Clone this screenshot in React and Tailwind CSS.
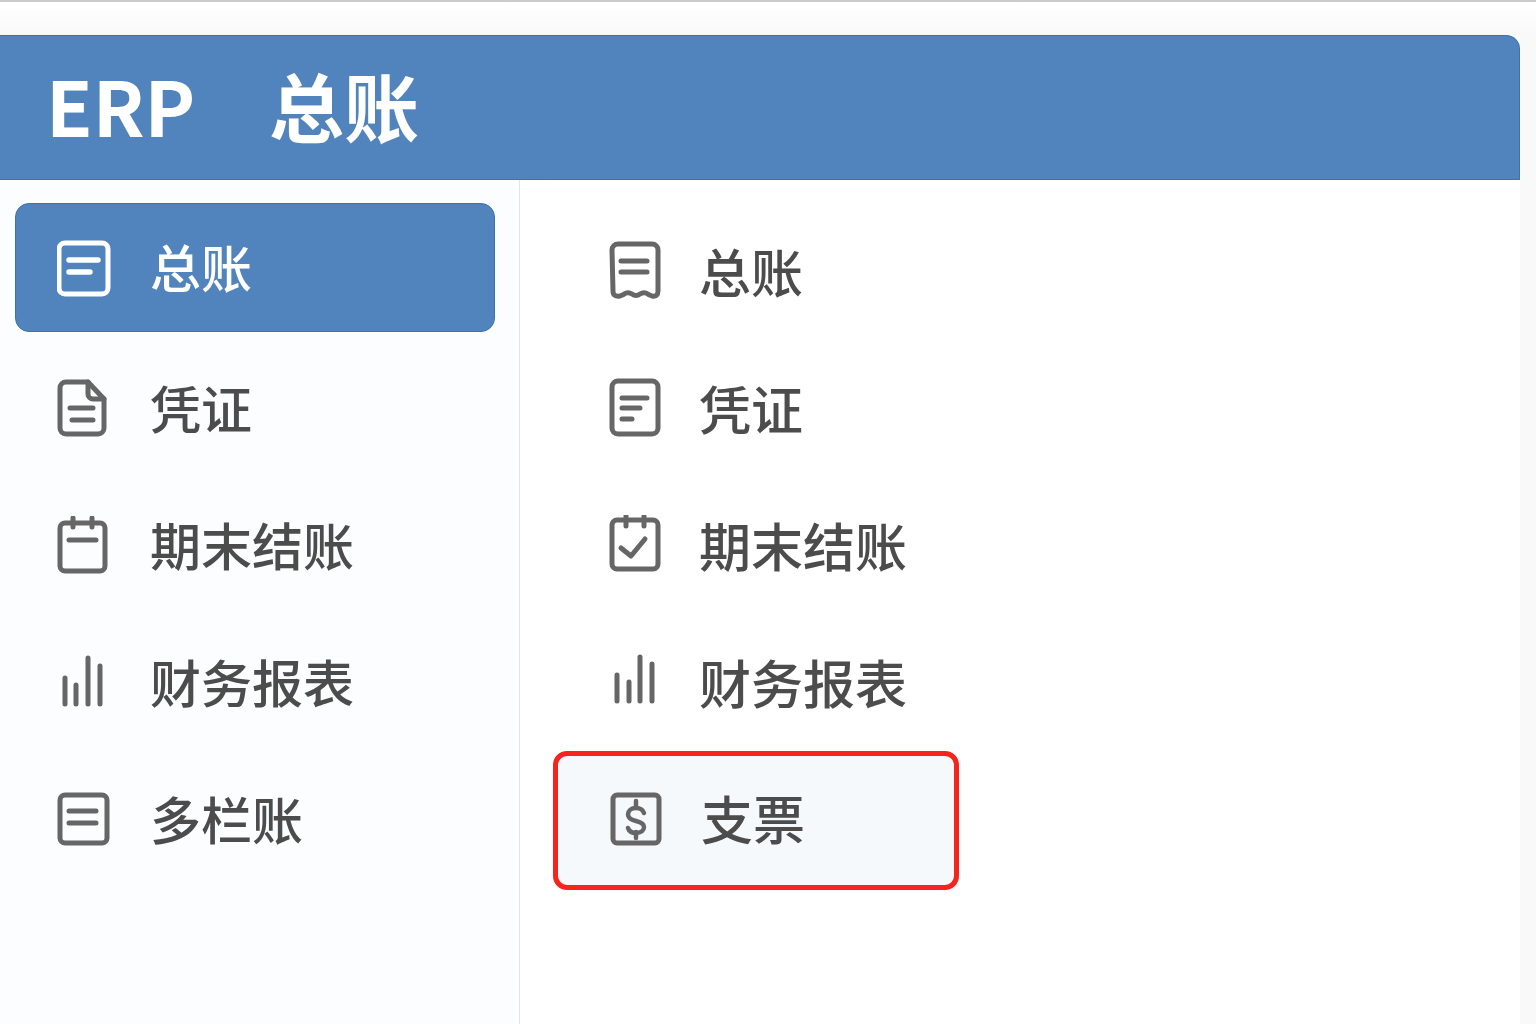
const cjk = { fontFamily: '"Noto Sans CJK SC", "Noto Sans", sans-serif' };

// every icon is drawn in a 60x60 box, coordinates read off the reference
const Icon = ({ children, stroke = '#666666' }) => (
  <svg
    className="w-[60px] h-[60px] shrink-0"
    viewBox="0 0 60 60"
    fill="none"
    stroke={stroke}
    strokeWidth={5}
    strokeLinecap="round"
    strokeLinejoin="round"
  >
    {children}
  </svg>
);

const sideItems = [
  {
    label: '总账',
    icon: (
      <>
        <rect x="2" y="5" width="49" height="51" rx="6" />
        <path d="M12 22H41M12 34H33" strokeWidth={5.5} />
      </>
    ),
  },
  {
    label: '凭证',
    icon: (
      <>
        <path d="M10 3H32L48 20V49a6 6 0 0 1-6 6H10a6 6 0 0 1-6-6V9a6 6 0 0 1 6-6Z" />
        <path d="M32 3V15a5 5 0 0 0 5 5H48" />
        <path d="M14 29H37M16 41H37" />
      </>
    ),
  },
  {
    label: '期末结账',
    icon: (
      <>
        <rect x="4" y="7" width="45" height="48" rx="5" />
        <path d="M17 2V11M36 2V11M13 24H40" />
      </>
    ),
  },
  {
    label: '财务报表',
    icon: <path d="M9 51V25M20 51V32M32 51V5M44 51V13" />,
  },
  {
    label: '多栏账',
    icon: (
      <>
        <rect x="4" y="5" width="47" height="48" rx="5" />
        <path d="M13 21H40M13 33H40" />
      </>
    ),
  },
];

const mainItems = [
  {
    label: '总账',
    icon: (
      <>
        <path d="M7 9a6 6 0 0 1 6-6H47a6 6 0 0 1 6 6V50q0 6-6 5q-3-1-6-3q-3-1-6 1q-4 3-8 0q-3-2-6-1q-3 2-6 3q-7 1-7-5Z" />
        <path d="M16 20H42M16 31H42" />
      </>
    ),
  },
  {
    label: '凭证',
    icon: (
      <>
        <rect x="7" y="3" width="46" height="53" rx="6" />
        <path d="M17 20H42M17 30H35M17 41H27" />
      </>
    ),
  },
  {
    label: '期末结账',
    icon: (
      <>
        <rect x="7" y="5" width="46" height="49" rx="5" />
        <path d="M21 1V11M39 1V11" />
        <path d="M16 33L26 41L40 24" />
      </>
    ),
  },
  {
    label: '财务报表',
    icon: <path d="M12 49V23M24 49V30M35 49V5M47 49V12" />,
  },
  {
    label: '支票',
    highlight: true,
    icon: (
      <>
        <rect x="8" y="4" width="46" height="48" rx="4" />
        <path d="M31 10V16M31 41V47" strokeWidth={4.5} />
        <path d="M39 22c-1-3-4-5-8-5c-5 0-8 3-8 6.500c0 4 4 5.500 8 6.500c4 1 8 2.500 8 6c0 3.500-3 6-8 6c-4 0-7-2-8-5" strokeWidth={4.5} />
      </>
    ),
  },
];

export default function App() {
  return (
    <div
      className="h-screen overflow-hidden bg-[#f9f9f9] border-t-2 border-[#cbcbcb] text-[#4c4c4c] flex flex-col"
      style={cjk}
    >
      <div className="h-[33px] shrink-0 bg-gradient-to-b from-white to-[#f9f9f9]" />

      <div className="flex-1 w-[1520px] flex flex-col bg-white min-h-0">
        {/* Title bar */}
        <header className="h-[145px] shrink-0 flex items-center pl-[46px] pb-[7px] bg-[#5184bc] border-y border-r border-[#3e72aa] rounded-tr-[14px] text-white font-semibold">
          <span className="w-[223px] text-[76px] leading-none">ERP</span>
          <span className="text-[75px] leading-none">总账</span>
        </header>

        <div className="flex-1 flex min-h-0">
          {/* Left menu */}
          <nav className="w-[520px] shrink-0 border-r border-[#e1e4e8] bg-[#fbfdfe] pt-[23px] pl-[15px] pr-[24px] flex flex-col font-medium">
            {sideItems.map((item, index) =>
              index === 0 ? (
                <div
                  key={item.label}
                  className="h-[129px] mb-[8px] flex items-center gap-[33px] pl-[41px] rounded-[14px] bg-[#5184bc] border border-[#3e72aa] text-white"
                >
                  <Icon stroke="#ffffff">{item.icon}</Icon>
                  <span className="text-[51px] leading-none pb-[3px]">{item.label}</span>
                </div>
              ) : (
                <div key={item.label} className="h-[137px] flex items-center gap-[34px] pl-[41px]">
                  <Icon>{item.icon}</Icon>
                  <span className="text-[51px] leading-none pb-[3px]">{item.label}</span>
                </div>
              )
            )}
          </nav>

          {/* Right panel */}
          <main className="flex-1 bg-white pt-[22px] pl-[33px] font-medium">
            <div className="w-[406px] flex flex-col">
              {mainItems.map((item) => (
                <div
                  key={item.label}
                  className={
                    item.highlight
                      ? 'h-[139px] mt-[1px] flex items-center gap-[36px] pl-[47px] rounded-[14px] border-[5px] border-[#f5241c] bg-[#f6f9fc]'
                      : 'h-[137px] flex items-center gap-[34px] pl-[47px] border-[5px] border-transparent'
                  }
                >
                  <Icon>{item.icon}</Icon>
                  <span className={item.highlight ? 'text-[52px] leading-none pb-[5px]' : 'text-[52px] leading-none'}>
                    {item.label}
                  </span>
                </div>
              ))}
            </div>
          </main>
        </div>
      </div>
    </div>
  );
}
